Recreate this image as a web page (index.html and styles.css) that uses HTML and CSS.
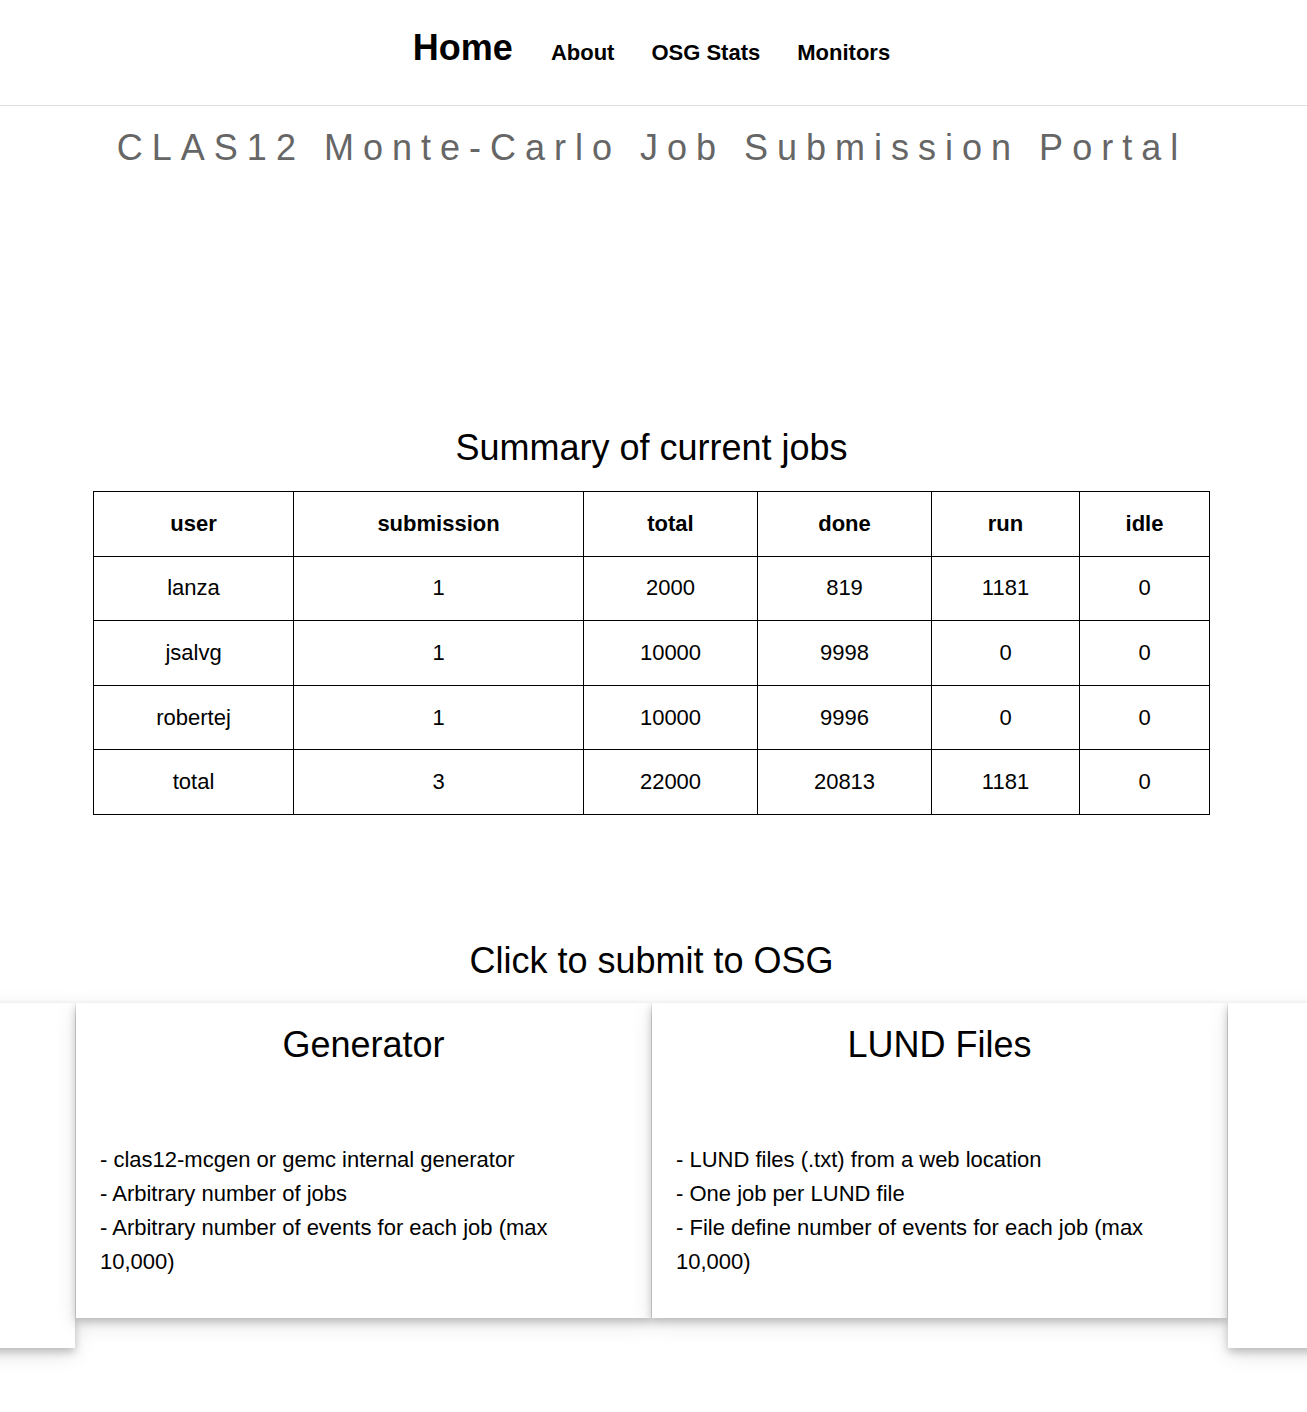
FILE: index.html
```html
<!DOCTYPE html>
<html>
<head>
<meta charset="utf-8">
<title>CLAS12 Monte-Carlo Job Submission Portal</title>
<link rel="stylesheet" href="styles.css">
</head>
<body>
<nav class="topnav">
  <a class="nav-home" href="#">Home</a>
  <a class="nav-link" href="#">About</a>
  <a class="nav-link" href="#">OSG Stats</a>
  <a class="nav-link" href="#">Monitors</a>
</nav>
<h1 class="portal-title">CLAS12 Monte-Carlo Job Submission Portal</h1>

<h2 class="section-title summary-title">Summary of current jobs</h2>
<table class="jobs">
  <colgroup>
    <col class="c-user"><col class="c-sub"><col class="c-total"><col class="c-done"><col class="c-run"><col class="c-idle">
  </colgroup>
  <thead>
    <tr><th>user</th><th>submission</th><th>total</th><th>done</th><th>run</th><th>idle</th></tr>
  </thead>
  <tbody>
    <tr><td>lanza</td><td>1</td><td>2000</td><td>819</td><td>1181</td><td>0</td></tr>
    <tr><td>jsalvg</td><td>1</td><td>10000</td><td>9998</td><td>0</td><td>0</td></tr>
    <tr><td>robertej</td><td>1</td><td>10000</td><td>9996</td><td>0</td><td>0</td></tr>
    <tr><td>total</td><td>3</td><td>22000</td><td>20813</td><td>1181</td><td>0</td></tr>
  </tbody>
</table>

<h2 class="section-title submit-title">Click to submit to OSG</h2>
<div class="carousel">
  <div class="card card-side"></div>
  <div class="card">
    <h3 class="card-title">Generator</h3>
    <p class="card-text">- clas12-mcgen or gemc internal generator<br>- Arbitrary number of jobs<br>- Arbitrary number of events for each job (max 10,000)</p>
  </div>
  <div class="card">
    <h3 class="card-title">LUND Files</h3>
    <p class="card-text">- LUND files (.txt) from a web location<br>- One job per LUND file<br>- File define number of events for each job (max 10,000)</p>
  </div>
  <div class="card card-side"></div>
</div>
</body>
</html>
```

FILE: styles.css
```css
html, body {
  margin: 0;
  padding: 0;
  background: #ffffff;
}
body {
  font-family: "Liberation Sans", Arial, sans-serif;
  color: #000;
}
.topnav {
  height: 106px;
  box-sizing: border-box;
  padding: 27px 4px 0 0;
  border-bottom: 1px solid #dcdcdc;
  display: flex;
  justify-content: center;
  align-items: baseline;
  gap: 37px;
}
.topnav a {
  color: #000;
  text-decoration: none;
  font-weight: bold;
}
.nav-home {
  font-size: 36px;
  line-height: 42px;
  margin-right: 1px;
}
.nav-link {
  font-size: 22px;
}
.portal-title {
  margin: 20px 0 0;
  padding: 0 4px 0 1px;
  text-align: center;
  font-size: 36px;
  line-height: 44px;
  font-weight: normal;
  letter-spacing: 9px;
  color: #666666;
}
.section-title {
  margin: 0;
  padding-right: 4px;
  text-align: center;
  font-size: 36px;
  line-height: 44px;
  font-weight: normal;
}
.summary-title {
  margin-top: 256px;
}
.jobs {
  margin: 21px 0 0 93px;
  border-collapse: collapse;
  font-size: 22px;
}
.jobs th, .jobs td {
  border: 1px solid #000;
  height: 63.6px;
  padding: 0;
  text-align: center;
  vertical-align: middle;
}
.jobs th { font-weight: bold; }
.c-user { width: 200px; }
.c-sub { width: 290px; }
.c-total { width: 174px; }
.c-done { width: 174px; }
.c-run { width: 148px; }
.c-idle { width: 130px; }
.submit-title {
  margin-top: 124px;
}
.carousel {
  display: flex;
  justify-content: center;
  align-items: flex-start;
  gap: 1px;
  overflow: hidden;
  padding: 16px 4px 40px 0;
  margin-top: 4px;
}
.card {
  flex: 0 0 575px;
  box-sizing: border-box;
  background: #fff;
  padding: 20px 24px 39px;
  box-shadow: 0 4px 8px 0 rgba(0, 0, 0, 0.2), 0 6px 20px 0 rgba(0, 0, 0, 0.12);
}
.card-side {
  height: 345px;
}
.card-title {
  margin: 0;
  text-align: center;
  font-size: 36px;
  line-height: 44px;
  font-weight: normal;
}
.card-text {
  margin: 76px 0 0;
  font-size: 22px;
  line-height: 34px;
}
```
